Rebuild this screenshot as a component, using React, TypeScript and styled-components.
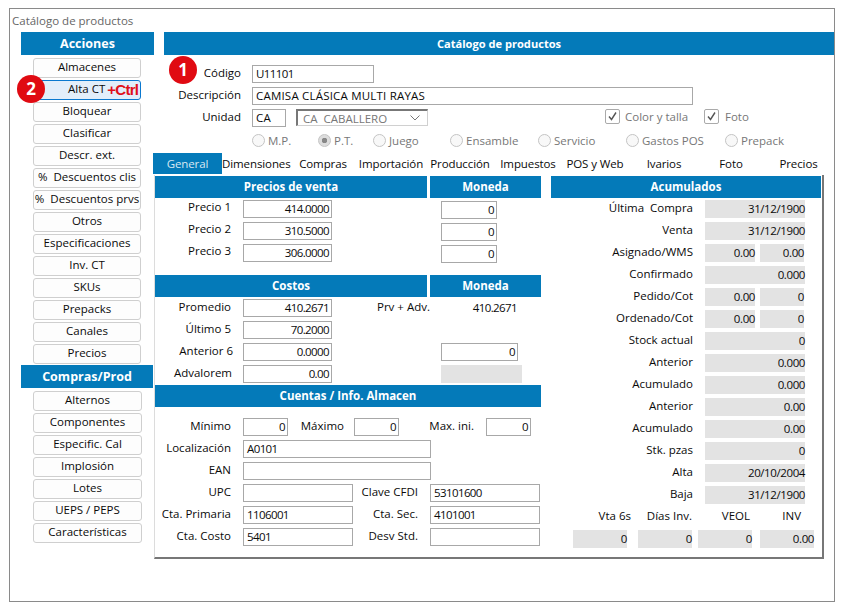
import React from 'react';
import styled, { createGlobalStyle } from 'styled-components';

const BLUE = '#047ab9';

const GlobalStyle = createGlobalStyle`
  html, body {
    margin: 0;
    background: #fff;
  }
  body {
    padding: 8px 9px;
    font-family: 'Open Sans', 'Noto Sans', sans-serif;
    font-size: 11.5px;
    color: #0a0a0a;
  }
`;

const actions = [
  'Almacenes',
  'Alta CT',
  'Bloquear',
  'Clasificar',
  'Descr. ext.',
  '%  Descuentos clis',
  '%  Descuentos prvs',
  'Otros',
  'Especificaciones',
  'Inv. CT',
  'SKUs',
  'Prepacks',
  'Canales',
  'Precios',
];

const purchases = ['Alternos', 'Componentes', 'Especific. Cal', 'Implosión', 'Lotes', 'UEPS / PEPS', 'Características'];

const tabs: [string, number][] = [
  ['General', 69],
  ['Dimensiones', 67],
  ['Compras', 68],
  ['Importación', 68],
  ['Producción', 70],
  ['Impuestos', 66],
  ['POS y Web', 68],
  ['Ivarios', 70],
  ['Foto', 64],
  ['Precios', 71],
];

const radios: [string, number, boolean][] = [
  ['M.P.', 66, false],
  ['P.T.', 55, true],
  ['Juego', 77, false],
  ['Ensamble', 88, false],
  ['Servicio', 88, false],
  ['Gastos POS', 99, false],
  ['Prepack', 80, false],
];

const acumulados: [string, string, string?][] = [
  ['Última  Compra', '31/12/1900'],
  ['Venta', '31/12/1900'],
  ['Asignado/WMS', '0.00', '0.00'],
  ['Confirmado', '0.000'],
  ['Pedido/Cot', '0.00', '0'],
  ['Ordenado/Cot', '0.00', '0'],
  ['Stock actual', '0'],
  ['Anterior', '0.000'],
  ['Acumulado', '0.000'],
  ['Anterior', '0.00'],
  ['Acumulado', '0.00'],
  ['Stk. pzas', '0'],
  ['Alta', '20/10/2004'],
  ['Baja', '31/12/1900'],
];

export default function App() {
  return (
    <Window>
      <GlobalStyle />
      <WindowTitle>Catálogo de productos</WindowTitle>
      <Badge $left={159} $top={47}>1</Badge>
      <Badge $left={7} $top={66}>2</Badge>
      <Body>
        <Sidebar>
          <SideHeader $w={133}>Acciones</SideHeader>
          <ButtonList>
            {actions.map((a) =>
              a === 'Alta CT' ? (
                <SideButton key={a} $active>
                  Alta CT<CtrlHint>+Ctrl</CtrlHint>
                </SideButton>
              ) : (
                <SideButton key={a}>{a}</SideButton>
              ),
            )}
          </ButtonList>
          <SideHeader $w={132} $mt={1}>Compras/Prod</SideHeader>
          <ButtonList>
            {purchases.map((a) => (
              <SideButton key={a} $wide>{a}</SideButton>
            ))}
          </ButtonList>
        </Sidebar>

        <Main>
          <MainHeader>Catálogo de productos</MainHeader>
          <TopForm>
            <Row>
              <Label $w={77}>Código</Label>
              <Field $w={122} $ml={11} $left $num>U11101</Field>
            </Row>
            <Row>
              <Label $w={77}>Descripción</Label>
              <Field $w={441} $ml={11} $left>CAMISA CLÁSICA MULTI RAYAS</Field>
            </Row>
            <Row>
              <Label $w={77}>Unidad</Label>
              <Field $w={34} $ml={11} $left>CA</Field>
              <Select>
                CA  CABALLERO
                <svg width="12" height="8" viewBox="0 0 12 8" fill="none" stroke="#777" strokeWidth="1">
                  <path d="M1.5 1.5 6 6l4.5-4.5" />
                </svg>
              </Select>
              <CheckItem $w={99} $ml={177}>
                <CheckBox>
                  <svg width="11" height="11" viewBox="0 0 11 11" fill="none" stroke="#555" strokeWidth="1.4">
                    <path d="M2 5.5 4.5 8.5 9 1.5" />
                  </svg>
                </CheckBox>
                Color y talla
              </CheckItem>
              <CheckItem $w={60}>
                <CheckBox>
                  <svg width="11" height="11" viewBox="0 0 11 11" fill="none" stroke="#555" strokeWidth="1.4">
                    <path d="M2 5.5 4.5 8.5 9 1.5" />
                  </svg>
                </CheckBox>
                <FotoLabel>Foto</FotoLabel>
              </CheckItem>
            </Row>
            <RadioRow>
              {radios.map(([label, w, on]) => (
                <RadioItem key={label} $w={w}>
                  <RadioDot $on={on} />
                  {label}
                </RadioItem>
              ))}
            </RadioRow>
          </TopForm>

          <TabBar>
            {tabs.map(([t, w], i) => (
              <Tab key={t} $w={w} $active={i === 0}>{t}</Tab>
            ))}
          </TabBar>

          <Panel>
            <LeftColumn>
              <Section $h={99}>
                <HeaderPair>
                  <SectionHeader>Precios de venta</SectionHeader>
                  <SectionHeader>Moneda</SectionHeader>
                </HeaderPair>
                <Rows>
                  {[
                    ['Precio 1', '414.0000'],
                    ['Precio 2', '310.5000'],
                    ['Precio 3', '306.0000'],
                  ].map(([l, v]) => (
                    <PanelRow key={l}>
                      <PriceLabel $w={76}>{l}</PriceLabel>
                      <Field $w={89} $ml={12}>{v}</Field>
                      <Field $w={56} $ml={109} $mt={1}>0</Field>
                    </PanelRow>
                  ))}
                </Rows>
              </Section>

              <Section $h={110}>
                <HeaderPair>
                  <SectionHeader>Costos</SectionHeader>
                  <SectionHeader>Moneda</SectionHeader>
                </HeaderPair>
                <Rows>
                  <PanelRow>
                    <Label $w={76}>Promedio</Label>
                    <Field $w={89} $ml={12}>410.2671</Field>
                    <Label $w={98}>Prv + Adv.</Label>
                    <PlainValue $w={87}>410.2671</PlainValue>
                  </PanelRow>
                  <PanelRow>
                    <Label $w={76}>Último 5</Label>
                    <Field $w={89} $ml={12}>70.2000</Field>
                  </PanelRow>
                  <PanelRow>
                    <Label $w={78}>Anterior 6</Label>
                    <Field $w={89} $ml={10}>0.0000</Field>
                    <Field $w={77} $ml={109}>0</Field>
                  </PanelRow>
                  <PanelRow>
                    <Label $w={77}>Advalorem</Label>
                    <Field $w={89} $ml={11}>0.00</Field>
                    <ReadOnly $w={81} $ml={109} />
                  </PanelRow>
                </Rows>
              </Section>

              <SectionHeader>Cuentas / Info. Almacen</SectionHeader>
              <AccountRows>
                <PanelRow>
                  <Label $w={76}>Mínimo</Label>
                  <Field $w={45} $ml={12}>0</Field>
                  <Label $w={45} $ml={11}>Máximo</Label>
                  <Field $w={45} $ml={10}>0</Field>
                  <Label $w={75}>Max. ini.</Label>
                  <Field $w={45} $ml={12}>0</Field>
                </PanelRow>
                <PanelRow>
                  <Label $w={76}>Localización</Label>
                  <Field $w={188} $ml={12} $left $num>A0101</Field>
                </PanelRow>
                <PanelRow>
                  <Label $w={76}>EAN</Label>
                  <Field $w={188} $ml={12} $left />
                </PanelRow>
                <PanelRow>
                  <Label $w={76}>UPC</Label>
                  <Field $w={110} $ml={12} $left />
                  <Label $w={65}>Clave CFDI</Label>
                  <Field $w={110} $ml={12} $left $num>53101600</Field>
                </PanelRow>
                <PanelRow>
                  <Label $w={76}>Cta. Primaria</Label>
                  <Field $w={110} $ml={12} $left $num>1106001</Field>
                  <Label $w={65}>Cta. Sec.</Label>
                  <Field $w={110} $ml={12} $left $num>4101001</Field>
                </PanelRow>
                <PanelRow>
                  <Label $w={76}>Cta. Costo</Label>
                  <Field $w={110} $ml={12} $left $num>5401</Field>
                  <Label $w={65}>Desv Std.</Label>
                  <Field $w={110} $ml={12} $left />
                </PanelRow>
              </AccountRows>
            </LeftColumn>

            <RightColumn>
              <SectionHeader>Acumulados</SectionHeader>
              <Rows>
                {acumulados.map(([l, a, b], i) => (
                  <PanelRow key={`${l}-${i}`}>
                    <Label $w={142}>{l}</Label>
                    {b === undefined ? (
                      <ReadOnly $w={100} $ml={12}>{a}</ReadOnly>
                    ) : (
                      <>
                        <ReadOnly $w={50} $ml={12}>{a}</ReadOnly>
                        <ReadOnly $w={44} $ml={5}>{b}</ReadOnly>
                      </>
                    )}
                  </PanelRow>
                ))}
                <PanelRow>
                  <Label $w={80}>Vta 6s</Label>
                  <Label $w={61}>Días Inv.</Label>
                  <Label $w={58}>VEOL</Label>
                  <Label $w={51}>INV</Label>
                </PanelRow>
                <PanelRow>
                  <ReadOnly $w={54} $ml={22}>0</ReadOnly>
                  <ReadOnly $w={54} $ml={11}>0</ReadOnly>
                  <ReadOnly $w={54} $ml={6}>0</ReadOnly>
                  <ReadOnly $w={54} $ml={8}>0.00</ReadOnly>
                </PanelRow>
              </Rows>
            </RightColumn>
          </Panel>
        </Main>
      </Body>
    </Window>
  );
}

const Window = styled.div`
  position: relative;
  box-sizing: border-box;
  width: 826px;
  height: 594px;
  border: 1px solid #8a8a8a;
  padding-left: 11px;
`;

const WindowTitle = styled.div`
  height: 23px;
  margin-left: -9px;
  padding-top: 4px;
  box-sizing: border-box;
  line-height: 16px;
  color: #666;
`;

const Badge = styled.div<{ $left: number; $top: number }>`
  position: absolute;
  left: ${({ $left }) => $left}px;
  top: ${({ $top }) => $top}px;
  width: 28px;
  height: 28px;
  border-radius: 50%;
  background: #e00a12;
  color: #fff;
  font-weight: 700;
  font-size: 17px;
  line-height: 28px;
  text-align: center;
  z-index: 2;
`;

const Body = styled.div`
  display: flex;
`;

const Sidebar = styled.div`
  width: 132px;
  flex: none;
`;

const SideHeader = styled.div<{ $w: number; $mt?: number }>`
  width: ${({ $w }) => $w}px;
  height: 23px;
  margin-top: ${({ $mt }) => $mt ?? 0}px;
  background: ${BLUE};
  color: #fff;
  font-weight: 700;
  font-size: 12.5px;
  line-height: 24px;
  text-align: center;
`;

const ButtonList = styled.div`
  display: flex;
  flex-direction: column;
  gap: 2px;
  padding: 3px 0 0 12px;
`;

const SideButton = styled.div<{ $active?: boolean; $wide?: boolean }>`
  box-sizing: border-box;
  width: ${({ $wide }) => ($wide ? 109 : 108)}px;
  height: 20px;
  border: 1px solid ${({ $active }) => ($active ? '#0a78cf' : '#cfcfcf')};
  border-radius: 3px;
  background: ${({ $active }) => ($active ? '#e2eefa' : '#fdfdfd')};
  line-height: 16px;
  white-space: pre;
  display: flex;
  justify-content: ${({ $active }) => ($active ? 'flex-start' : 'center')};
  padding-left: ${({ $active }) => ($active ? 34 : 0)}px;
`;

const CtrlHint = styled.span`
  margin-left: 2px;
  color: #e0101a;
  font-family: 'Liberation Sans', sans-serif;
  font-weight: 700;
  font-size: 15px;
  letter-spacing: -0.7px;
  line-height: 17px;
`;

const Main = styled.div`
  width: 681px;
  flex: none;
`;

const MainHeader = styled.div`
  height: 23px;
  margin-left: 11px;
  background: ${BLUE};
  color: #fff;
  font-weight: 700;
  font-size: 11.1px;
  line-height: 23px;
  text-align: center;
`;

const TopForm = styled.div`
  padding: 10px 0 0 11px;
`;

const Row = styled.div`
  display: flex;
  height: 22px;
`;

const Label = styled.div<{ $w: number; $ml?: number }>`
  flex: none;
  width: ${({ $w }) => $w}px;
  margin-left: ${({ $ml }) => $ml ?? 0}px;
  height: 18px;
  line-height: 16px;
  text-align: right;
  white-space: pre;
`;

const PriceLabel = styled(Label)`
  line-height: 14px;
`;

const Field = styled.div<{ $w: number; $ml?: number; $mt?: number; $left?: boolean; $num?: boolean }>`
  flex: none;
  box-sizing: border-box;
  width: ${({ $w }) => $w}px;
  height: 18px;
  margin-left: ${({ $ml }) => $ml ?? 0}px;
  margin-top: ${({ $mt }) => $mt ?? 0}px;
  padding: 0 2px 0 3px;
  border: 1px solid #a8a8a8;
  background: #fff;
  line-height: 16px;
  text-align: ${({ $left }) => ($left ? 'left' : 'right')};
  letter-spacing: ${({ $left, $num }) => ($left && !$num ? '0.2px' : '-0.6px')};
  white-space: pre;
`;

const ReadOnly = styled.div<{ $w: number; $ml?: number }>`
  flex: none;
  box-sizing: border-box;
  width: ${({ $w }) => $w}px;
  height: 18px;
  margin-left: ${({ $ml }) => $ml ?? 0}px;
  background: #e3e3e3;
  line-height: 18px;
  text-align: right;
  letter-spacing: -0.4px;
`;

const PlainValue = styled.div<{ $w: number }>`
  flex: none;
  width: ${({ $w }) => $w}px;
  line-height: 18px;
  text-align: right;
  letter-spacing: -0.6px;
`;

const Select = styled.div`
  box-sizing: border-box;
  display: flex;
  align-items: center;
  justify-content: space-between;
  width: 132px;
  height: 17px;
  margin-left: 10px;
  padding: 0 6px 0 5px;
  border: 1px solid #d0d0d0;
  border-top: 2px solid #777;
  border-left: 2px solid #777;
  color: #777;
  white-space: pre;
`;

const CheckItem = styled.div<{ $w: number; $ml?: number }>`
  display: flex;
  gap: 5px;
  width: ${({ $w }) => $w}px;
  margin-left: ${({ $ml }) => $ml ?? 0}px;
  height: 15px;
  line-height: 15px;
  color: #777;
  white-space: nowrap;
`;

const CheckBox = styled.span`
  box-sizing: border-box;
  flex: none;
  display: flex;
  align-items: center;
  justify-content: center;
  width: 15px;
  height: 15px;
  border: 1.5px solid #aaa;
  border-radius: 2px;
`;

const FotoLabel = styled.span`
  margin-left: 1px;
`;

const RadioRow = styled.div`
  display: flex;
  padding: 0 0 4px 88px;
  box-sizing: border-box;
  height: 22px;
  align-items: center;
`;

const RadioItem = styled.div<{ $w: number }>`
  display: flex;
  align-items: center;
  gap: 3px;
  width: ${({ $w }) => $w}px;
  flex: none;
  color: #777;
  white-space: nowrap;
`;

const RadioDot = styled.span<{ $on: boolean }>`
  box-sizing: border-box;
  width: 13px;
  height: 13px;
  border-radius: 50%;
  border: 1px solid #c4c4c4;
  background: ${({ $on }) => ($on ? 'radial-gradient(circle, #888 0 2.5px, #ddd 3px)' : '#f8f8f8')};
`;

const TabBar = styled.div`
  display: flex;
  height: 21px;
`;

const Tab = styled.div<{ $w: number; $active: boolean }>`
  flex: none;
  width: ${({ $w }) => $w}px;
  text-align: center;
  line-height: 22px;
  white-space: nowrap;
  letter-spacing: -0.1px;
  background: ${({ $active }) => ($active ? BLUE : 'transparent')};
  color: ${({ $active }) => ($active ? '#d8e8f2' : '#0a0a0a')};
`;

const Panel = styled.div`
  box-sizing: border-box;
  display: flex;
  width: 670px;
  height: 384px;
  margin: 1px 0 0 1px;
  padding-top: 1px;
  border-left: 1px solid #dcdcdc;
  border-right: 2px solid #777;
  border-bottom: 2px solid #777;
`;

const LeftColumn = styled.div`
  width: 386px;
  flex: none;
`;

const RightColumn = styled.div`
  width: 270px;
  flex: none;
  margin-left: 10px;
`;

const Section = styled.div<{ $h: number }>`
  height: ${({ $h }) => $h}px;
`;

const HeaderPair = styled.div`
  display: grid;
  grid-template-columns: 272px 111px;
  gap: 3px;
`;

const SectionHeader = styled.div`
  height: 22px;
  background: ${BLUE};
  color: #fff;
  font-weight: 700;
  font-size: 11.5px;
  line-height: 22px;
  text-align: center;
`;

const Rows = styled.div`
  padding-top: 2px;
`;

const AccountRows = styled.div`
  padding-top: 11px;
`;

const PanelRow = styled.div`
  display: flex;
  height: 22px;
`;
